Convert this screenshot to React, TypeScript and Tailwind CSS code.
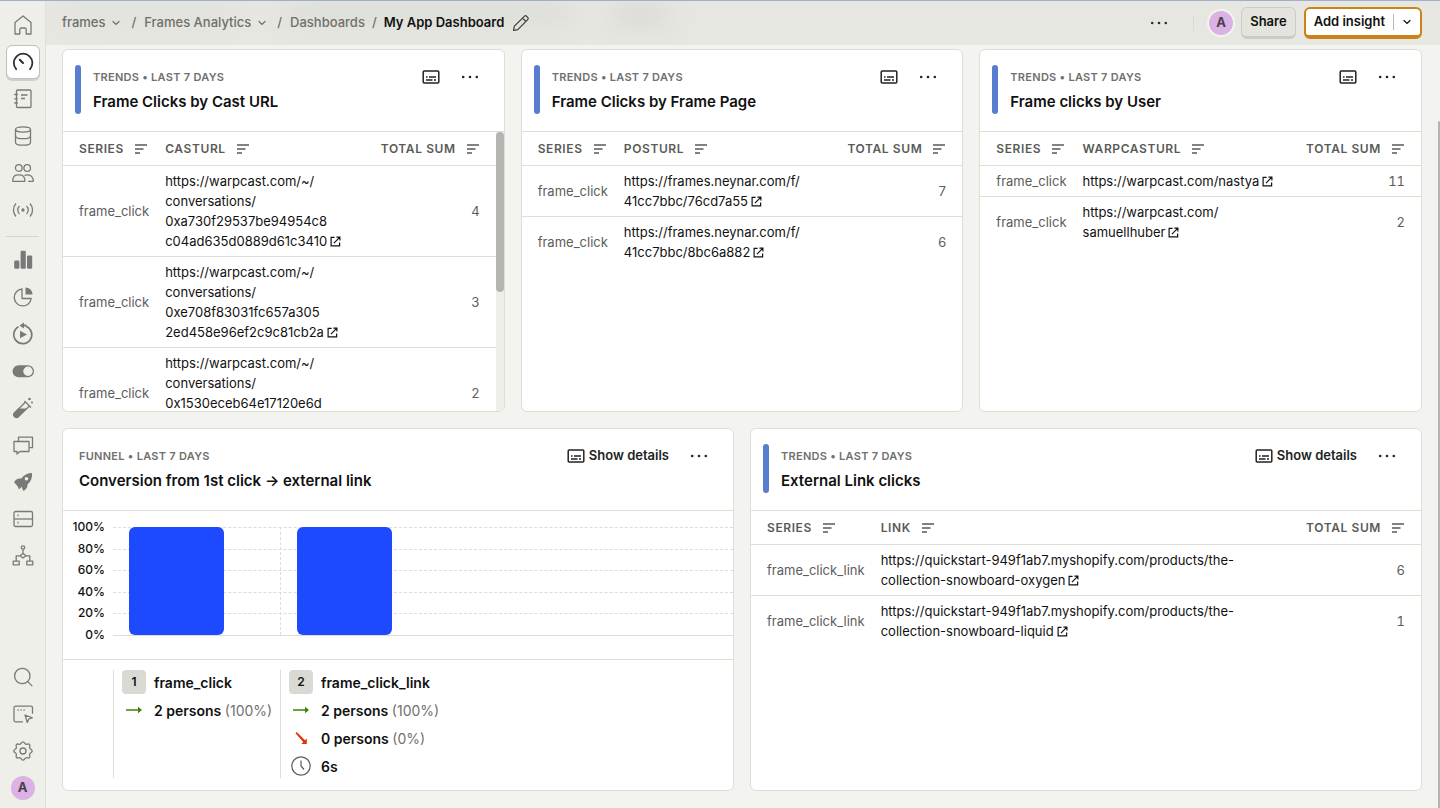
import React from "react";

// Sidebar icons, drawn on a 24px grid
const ICONS: Record<string, React.ReactNode> = {
  home: <path d="M4 9.6 12 3l8 6.600V21h-4.800v-4.500a1.500 1.500 0 0 0-1.500-1.500h-3.400a1.500 1.500 0 0 0-1.500 1.500V21H4Z" />,
  dashboards: (
    <g strokeWidth="1.8" strokeLinecap="round">
      <path d="M5.200 19.200a9.300 9.300 0 1 1 13.800 0" />
      <path d="M8.800 9.800 12 13" strokeWidth="2" />
    </g>
  ),
  notebooks: (
    <>
      <rect x="5.500" y="3" width="14.500" height="17.500" rx="1" />
      <path d="M3.300 7.500h3.500M3.300 11.800h3.500M3.300 16h3.500M10 8h6.500M10 11.500h4" />
    </>
  ),
  database: (
    <>
      <ellipse cx="12" cy="5.500" rx="7.500" ry="2.600" />
      <path d="M4.500 5.500v13c0 1.500 3.200 2.700 7.500 2.700s7.500-1.200 7.500-2.700v-13" />
      <path d="M4.500 12c0 1.500 3.200 2.700 7.500 2.700s7.500-1.200 7.500-2.700" />
    </>
  ),
  persons: (
    <>
      <circle cx="7.800" cy="7" r="3.300" />
      <circle cx="16.200" cy="7" r="3.300" />
      <path d="M1.800 20.300v-1.800a5.500 5.500 0 0 1 5.500-4.700h1a5.500 5.500 0 0 1 5.500 4.700v1.800Z" />
      <path d="M13.500 14.400c.9-.4 1.700-.6 2.700-.6 3 0 5.300 1.900 6 4.700v1.800h-5" />
    </>
  ),
  live: (
    <>
      <circle cx="12" cy="12" r="1" fill="currentColor" />
      <path d="M8.500 8a5.500 5.500 0 0 0 0 8M15.500 8a5.500 5.500 0 0 1 0 8M5 5.500a9.600 9.600 0 0 0 0 13M19 5.500a9.600 9.600 0 0 1 0 13" />
    </>
  ),
  insights: (
    <g fill="currentColor" stroke="none">
      <rect x="3.200" y="12.500" width="5.200" height="8.300" rx="1.300" />
      <rect x="9.600" y="2.800" width="5.200" height="18" rx="1.300" />
      <rect x="16" y="7.500" width="5.200" height="13.300" rx="1.300" />
    </g>
  ),
  pie: (
    <>
      <path d="M11 4a8.500 8.500 0 1 0 9.200 9.500H11Z" />
      <path d="M14.500 2.500a7 7 0 0 1 7 7h-7Z" fill="currentColor" stroke="none" />
    </>
  ),
  replay: (
    <>
      <path d="M7.500 4.700a9 9 0 1 0 7.500-.5" strokeWidth="1.700" />
      <path d="M8.500 3.500 13 .600v5.800Z" fill="currentColor" stroke="none" />
      <path d="M11 3.500h4.500" strokeWidth="2" />
      <path d="M9 8.800v7.400l7-3.700Z" fill="currentColor" stroke="none" />
    </>
  ),
  flags: (
    <>
      <rect x="1.600" y="6.300" width="21.400" height="12" rx="6" fill="currentColor" stroke="none" />
      <circle cx="17" cy="12.300" r="4.700" className="fill-[#eeefe9]" stroke="none" />
    </>
  ),
  experiments: (
    <>
      <path d="m13.500 5 6.500 6.500" />
      <path d="m14.500 6-10.700 10.700a2.600 2.600 0 0 0 3.700 3.700L18.500 10" />
      <path d="M7 12.500h9l-8 8.500a3.200 3.200 0 0 1-5-4.500Z" fill="currentColor" stroke="none" />
      <circle cx="18.500" cy="3" r="1.300" fill="currentColor" stroke="none" />
      <circle cx="21" cy="6.500" r="1" fill="currentColor" stroke="none" />
    </>
  ),
  surveys: (
    <>
      <path d="M7.500 8V4.200h14v10.500h-3.200" />
      <path d="M3 8.500h15V18.500H9l-3 2.500v-2.500H3Z" />
    </>
  ),
  rocket: (
    <path
      fillRule="evenodd"
      stroke="none"
      fill="currentColor"
      d="M21 3c.3 5-1 8.500-4.500 11.500.3 3-1.500 5-4 6.500-1-1.500-1.500-3-1.800-4.200L8 19.500 6.500 16C5 14.500 4 13.500 3 12c2-2.500 4.300-3.700 7-3.300C13 5 16.500 3 21 3Zm-5.500 4a1.800 1.800 0 1 0 0 3.600 1.800 1.800 0 0 0 0-3.600Z"
    />
  ),
  warehouse: (
    <>
      <rect x="3" y="4.500" width="18.500" height="15" rx="1.500" />
      <path d="M3 12h18.500" />
      <path d="M6.500 8.300h1.200M6.500 15.700h1.200" strokeWidth="1.800" />
    </>
  ),
  pipeline: (
    <>
      <circle cx="12" cy="3.500" r="1.700" />
      <path d="M12 5.200v4.300M12 9.500l3 2.300-3 2.300-3-2.300ZM9 11.800H5.200v5.400M15 11.800h3.800v5.400" />
      <rect x="2.200" y="17.200" width="6" height="3.600" />
      <rect x="15.800" y="17.200" width="6" height="3.600" />
    </>
  ),
  search: (
    <>
      <circle cx="11.300" cy="11" r="7.700" />
      <path d="m16.800 16.600 4.500 4.500" />
    </>
  ),
  toolbar: (
    <>
      <path d="M12 19.800H4.500A1.500 1.500 0 0 1 3 18.300V5.700a1.500 1.500 0 0 1 1.500-1.500h15A1.500 1.500 0 0 1 21.500 5.700v6" />
      <path d="M6.500 8h1.200M9.500 8h1.200M12.500 8h1.200" strokeWidth="1.700" />
      <path d="m14 13 7.300 2.800-3.500 1.200-1.500 3.500Z" />
    </>
  ),
  settings: (
    <>
      <circle cx="12" cy="12" r="3" />
      <path d="M12 2.800c1.500 0 1.700 2 2.900 2.400 1.200.5 2.500-.9 3.600.2s-.3 2.400.2 3.600c.5 1.200 2.500 1.500 2.500 3s-2 1.800-2.500 3c-.5 1.200.9 2.500-.2 3.600s-2.400-.3-3.600.2c-1.200.4-1.400 2.400-2.900 2.400s-1.700-2-2.900-2.400c-1.200-.5-2.500.9-3.600-.2s.3-2.400-.2-3.600c-.5-1.200-2.500-1.500-2.500-3s2-1.800 2.500-3c.5-1.200-.9-2.500.2-3.600s2.400.3 3.600-.2c1.200-.4 1.400-2.400 2.900-2.400Z" />
    </>
  ),
};

const NAV_TOP = ["home", "dashboards", "notebooks", "database", "persons", "live"];
const NAV_PRODUCTS = ["insights", "pie", "replay", "flags", "experiments", "surveys", "rocket", "warehouse", "pipeline"];
const NAV_BOTTOM = ["search", "toolbar", "settings"];

function NavButton({ name, active = false }: { name: string; active?: boolean }) {
  return (
    <button
      aria-label={name}
      className={
        active
          ? "my-px flex h-[34px] w-[34px] cursor-pointer items-center justify-center rounded-md border border-[#bfc0bb] bg-white text-[#2d2d2d] shadow-[0_2px_0_#cfd0ca]"
          : "flex h-9 w-[34px] cursor-pointer items-center justify-center text-[#797a77]"
      }
    >
      <svg className="size-6 shrink-0" viewBox="0 0 24 24" fill="none" stroke="currentColor" strokeWidth="1.300" strokeLinejoin="round">
        {ICONS[name]}
      </svg>
    </button>
  );
}

function Avatar({ className = "" }: { className?: string }) {
  return (
    <span className={`flex size-6 items-center justify-center rounded-full bg-[#dcb1e3] text-[13px] font-bold text-[#4a3f4c] ${className}`}>
      A
    </span>
  );
}

function Sidebar() {
  return (
    <aside className="flex w-[46px] shrink-0 flex-col items-center border-r border-[#dfe0da] bg-[#eeefe9] pt-1.5 pb-2">
      <nav className="flex flex-col items-center gap-px">
        {NAV_TOP.map((name) => (
          <NavButton key={name} name={name} active={name === "dashboards"} />
        ))}
      </nav>
      <hr className="mt-2 mb-[5px] w-[33px] border-[#d4d5ce]" />
      <nav className="flex flex-col items-center gap-px">
        {NAV_PRODUCTS.map((name) => (
          <NavButton key={name} name={name} />
        ))}
      </nav>
      <div className="mt-auto flex flex-col items-center gap-px">
        {NAV_BOTTOM.map((name) => (
          <NavButton key={name} name={name} />
        ))}
        <button aria-label="Account" className="mt-1.5 cursor-pointer">
          <Avatar />
        </button>
      </div>
    </aside>
  );
}

function Chevron() {
  return (
    <svg className="size-2.5" viewBox="0 0 10 10" fill="none" stroke="currentColor" strokeWidth="1.200" strokeLinecap="round">
      <path d="m2 3.500 3 3 3-3" />
    </svg>
  );
}

function Dots() {
  return (
    <svg className="h-6 w-5" viewBox="0 0 20 24" fill="currentColor">
      <circle cx="3.200" cy="12" r="1.300" />
      <circle cx="10" cy="12" r="1.300" />
      <circle cx="16.800" cy="12" r="1.300" />
    </svg>
  );
}

function TopBar() {
  return (
    <header className="relative flex h-11 shrink-0 items-center justify-between overflow-hidden bg-[#e6e7e1] pr-[18px] pl-4">
      {/* page content showing through behind the bar */}
      <div className="absolute top-1 left-6 h-3 w-40 rounded-full bg-[#dcddd7] blur-md" />
      <div className="absolute top-1 left-60 h-4 w-72 rounded-full bg-[#d9dad4] blur-md" />
      <div className="absolute top-2 left-[566px] h-3 w-14 rounded-full bg-[#cfd0ca] blur-md" />

      <nav className="relative flex items-center text-[13px] font-medium text-[#6f706c]">
        <a href="#" className="flex items-center gap-1.5">frames <Chevron /></a>
        <span className="mr-2 ml-2.5">/</span>
        <a href="#" className="flex items-center gap-1.5">Frames Analytics <Chevron /></a>
        <span className="mr-2 ml-2.5">/</span>
        <a href="#">Dashboards</a>
        <span className="mx-[7px]">/</span>
        <span className="font-semibold text-[#111]">My App Dashboard</span>
        <button aria-label="Rename dashboard" className="ml-[7px] cursor-pointer text-[#3c3c3a]">
          <svg className="size-5" viewBox="0 0 20 20" fill="none" stroke="currentColor" strokeWidth="1.200" strokeLinejoin="round">
            <path d="m2.500 17.500.9-4.300L13.300 3.300a1.700 1.700 0 0 1 2.400 0l1 1a1.700 1.700 0 0 1 0 2.400L6.800 16.600ZM11.500 5.100l3.400 3.400" />
          </svg>
        </button>
      </nav>

      <div className="relative flex items-center">
        <button aria-label="More options" className="cursor-pointer text-[#2d2d2d]"><Dots /></button>
        <div className="mr-[13px] ml-6 h-4 w-px bg-[#d9dad4]" />
        <Avatar className="box-content border-2 border-[#f3f4ef]" />
        <button className="ml-1.5 h-8 cursor-pointer rounded-md border border-b-3 border-[#cbccc6] bg-[#e3e4de] px-2 text-[13px] font-semibold text-[#111]">
          Share
        </button>
        <button className="ml-2 flex h-8 cursor-pointer items-center rounded-md border-2 border-b-4 border-[#c98317] bg-white px-2 text-[13px] font-semibold text-[#111]">
          Add insight
          <span className="mr-2 ml-2 h-4 w-px bg-[#b9bab5]" />
          <Chevron />
        </button>
      </div>
    </header>
  );
}

function DetailsIcon() {
  return (
    <svg className="h-4 w-[18px]" viewBox="0 0 18 16" fill="none" stroke="currentColor" strokeWidth="1.500">
      <rect x="1.200" y="2" width="15.600" height="12" rx="1" />
      <path d="M4 8h1.500M7 8h7M4 11h6.500M12 11h2" strokeWidth="1.300" />
    </svg>
  );
}

interface CardProps {
  kind: string;
  title: string;
  ribbon?: boolean;
  details?: boolean;
  children: React.ReactNode;
}

const Card: React.FC<CardProps> = ({ kind, title, ribbon = true, details = false, children }) => (
  <section className="flex h-[363px] min-w-0 flex-col overflow-hidden rounded-md border border-[#dddfd7] bg-white">
    <div className="flex h-[82px] shrink-0 items-start border-b border-[#dddfd7] px-4 pt-[15px]">
      {ribbon && <div className="mr-3 -ml-1 h-[49px] w-1.5 shrink-0 rounded-full bg-[#597dce]" />}
      <div className="flex min-w-0 flex-1 flex-col gap-px">
        <p className="text-[11px] leading-6 font-semibold tracking-wide text-[#70716e] uppercase">{kind} • Last 7 days</p>
        <h4 className="truncate text-[15px] leading-6 font-semibold text-[#111]">{title}</h4>
      </div>
      <div className="flex h-6 items-center gap-5 pr-2 text-[#222]">
        <button aria-label="Show details" className="flex cursor-pointer items-center gap-1 text-[13px] font-semibold">
          <DetailsIcon />
          {details && "Show details"}
        </button>
        <button aria-label="More" className="cursor-pointer"><Dots /></button>
      </div>
    </div>
    {children}
  </section>
);

function SortIcon() {
  return (
    <svg className="h-3 w-3.5" viewBox="0 0 14 12" fill="none" stroke="currentColor" strokeWidth="1.300">
      <path d="M1 2h12M1 6h8.500M1 10h5" />
    </svg>
  );
}

function LinkOut() {
  return (
    <svg className="ml-[3px] inline-block size-[11px] align-[-1px]" viewBox="0 0 12 12" fill="none" stroke="currentColor" strokeWidth="1.300">
      <path d="M5 1.500H1.200v9.300h9.300V7M7 1.200h3.800V5M10.800 1.200 4.300 7.700" />
    </svg>
  );
}

interface Row {
  series: string;
  lines: string[];
  total: number;
}

function DataTable({ column, rows }: { column: string; rows: Row[] }) {
  const heading = "flex items-center gap-2.5 text-[12px] font-semibold tracking-wider text-[#5a5b58] uppercase";
  return (
    <table className="w-full border-collapse text-[13px] leading-5">
      <thead>
        <tr className="h-[33px] border-b border-[#dddfd7]">
          <th className="w-px pt-0.5 pr-2 pl-4 whitespace-nowrap"><span className={heading}>Series <SortIcon /></span></th>
          <th className="px-2 pt-0.5"><span className={heading}>{column} <SortIcon /></span></th>
          <th className="w-px pt-0.5 pr-4 pl-2 whitespace-nowrap"><span className={heading}>Total sum <SortIcon /></span></th>
        </tr>
      </thead>
      <tbody>
        {rows.map((row, i) => (
          <tr key={i} className="border-b border-[#dddfd7] last:border-b-0">
            <td className="py-[5px] pr-2 pl-4 whitespace-nowrap text-[#5c5d5a]">{row.series}</td>
            <td className="px-2 py-[5px]">
              <a href="#" className="text-[#111]">
                {row.lines.map((line, j) => (
                  <React.Fragment key={j}>
                    {j > 0 && <br />}
                    {line}
                  </React.Fragment>
                ))}
                <LinkOut />
              </a>
            </td>
            <td className="py-[5px] pr-4 pl-2 text-right text-[#5c5d5a] tabular-nums">{row.total}</td>
          </tr>
        ))}
      </tbody>
    </table>
  );
}

const CAST_ROWS: Row[] = [
  { series: "frame_click", lines: ["https://warpcast.com/~/", "conversations/", "0xa730f29537be94954c8", "c04ad635d0889d61c3410"], total: 4 },
  { series: "frame_click", lines: ["https://warpcast.com/~/", "conversations/", "0xe708f83031fc657a305", "2ed458e96ef2c9c81cb2a"], total: 3 },
  { series: "frame_click", lines: ["https://warpcast.com/~/", "conversations/", "0x1530eceb64e17120e6d", ""], total: 2 },
];

const PAGE_ROWS: Row[] = [
  { series: "frame_click", lines: ["https://frames.neynar.com/f/", "41cc7bbc/76cd7a55"], total: 7 },
  { series: "frame_click", lines: ["https://frames.neynar.com/f/", "41cc7bbc/8bc6a882"], total: 6 },
];

const USER_ROWS: Row[] = [
  { series: "frame_click", lines: ["https://warpcast.com/nastya"], total: 11 },
  { series: "frame_click", lines: ["https://warpcast.com/", "samuellhuber"], total: 2 },
];

const LINK_ROWS: Row[] = [
  { series: "frame_click_link", lines: ["https://quickstart-949f1ab7.myshopify.com/products/the-", "collection-snowboard-oxygen"], total: 6 },
  { series: "frame_click_link", lines: ["https://quickstart-949f1ab7.myshopify.com/products/the-", "collection-snowboard-liquid"], total: 1 },
];

const TICKS = ["100%", "80%", "60%", "40%", "20%", "0%"];

const STEPS = [
  { name: "frame_click", converted: 100 },
  { name: "frame_click_link", converted: 100, dropped: 0, time: "6s" },
];

function StepLine({ icon, children }: { icon: React.ReactNode; children: React.ReactNode }) {
  return (
    <div className="flex h-6 items-center gap-2 whitespace-nowrap">
      <span className="flex size-6 items-center justify-center">{icon}</span>
      <span>{children}</span>
    </div>
  );
}

function Funnel() {
  return (
    <>
      <div className="flex border-b border-[#dddfd7] pt-1.5 pb-3.5">
        <div className="flex h-32 w-[50px] shrink-0 flex-col justify-between pr-2 text-right text-[12px] leading-5 font-medium text-[#111]">
          {TICKS.map((tick) => (
            <span key={tick}>{tick}</span>
          ))}
        </div>
        <div className="relative mt-2.5 h-[109px] flex-1">
          <div className="absolute inset-0 flex flex-col justify-between">
            {TICKS.map((tick) => (
              <div key={tick} className="border-t border-dashed border-[#dcddd6] last:border-solid" />
            ))}
          </div>
          <div className="relative flex h-full pb-px">
            {STEPS.map((step) => (
              <div key={step.name} className="flex w-[168px] items-end border-dashed border-[#dcddd6] pl-4 not-last:border-r">
                <div className="w-[95px] rounded-md bg-[#1d4aff]" style={{ height: `${step.converted}%` }} />
              </div>
            ))}
          </div>
        </div>
      </div>
      <div className="flex flex-1 pt-2.5 pb-3 pl-[50px] text-[14px] font-semibold text-[#111]">
        {STEPS.map((step, i) => (
          <div key={step.name} className="flex w-[167px] flex-col gap-1 border-l border-[#dddfd7] pl-2">
            <StepLine icon={<span className="flex size-6 items-center justify-center rounded bg-[#d9dad4] text-[12px]">{i + 1}</span>}>
              {step.name}
            </StepLine>
            <StepLine
              icon={
                <svg className="size-5 text-[#388600]" viewBox="0 0 20 20" fill="currentColor">
                  <path d="M2 9.200h12V6.700L18 10l-4 3.300v-2.500H2Z" />
                </svg>
              }
            >
              2 persons <span className="font-normal text-[#70716e]">({step.converted}%)</span>
            </StepLine>
            {step.dropped !== undefined && (
              <StepLine
                icon={
                  <svg className="size-5 text-[#db3707]" viewBox="0 0 20 20" fill="currentColor">
                    <path d="m4.500 5.200 1.200-1.200 8.300 8.300 1.800-1.800V16h-5.500l1.900-2.100Z" />
                  </svg>
                }
              >
                0 persons <span className="font-normal text-[#70716e]">({step.dropped}%)</span>
              </StepLine>
            )}
            {step.time && (
              <StepLine
                icon={
                  <svg className="size-5 text-[#5a5b58]" viewBox="0 0 20 20" fill="none" stroke="currentColor" strokeWidth="1.200">
                    <circle cx="10" cy="10" r="9.200" />
                    <path d="M10 4.500V10l3 3.500" />
                  </svg>
                }
              >
                {step.time}
              </StepLine>
            )}
          </div>
        ))}
      </div>
    </>
  );
}

export default function App() {
  return (
    <div className="flex h-screen overflow-hidden border-t border-[#a0aed0] bg-[#f3f4ef] font-['Inter','Liberation_Sans',sans-serif] text-[#111]">
      <Sidebar />
      <div className="flex min-w-0 flex-1 flex-col">
        <TopBar />
        <div className="flex flex-1">
          <main className="flex min-w-0 flex-1 flex-col gap-4 pt-1 pr-4 pl-4">
            <div className="grid grid-cols-3 gap-4">
              <Card kind="Trends" title="Frame Clicks by Cast URL">
                <div className="flex min-h-0 flex-1">
                  <div className="min-w-0 flex-1 overflow-hidden">
                    <DataTable column="casturl" rows={CAST_ROWS} />
                  </div>
                  <div className="w-2 bg-[#eeefe9]">
                    <div className="h-40 rounded-full bg-[#b4b5b1]" />
                  </div>
                </div>
              </Card>
              <Card kind="Trends" title="Frame Clicks by Frame Page">
                <DataTable column="posturl" rows={PAGE_ROWS} />
              </Card>
              <Card kind="Trends" title="Frame clicks by User">
                <DataTable column="warpcasturl" rows={USER_ROWS} />
              </Card>
            </div>
            <div className="grid grid-cols-2 gap-4">
              <Card kind="Funnel" title="Conversion from 1st click → external link" ribbon={false} details>
                <Funnel />
              </Card>
              <Card kind="Trends" title="External Link clicks" details>
                <DataTable column="link" rows={LINK_ROWS} />
              </Card>
            </div>
          </main>
          <div className="flex w-0.5 flex-col justify-end">
            <div className="h-[90%] rounded-t-full bg-[#b4b5b1]" />
          </div>
        </div>
      </div>
    </div>
  );
}
